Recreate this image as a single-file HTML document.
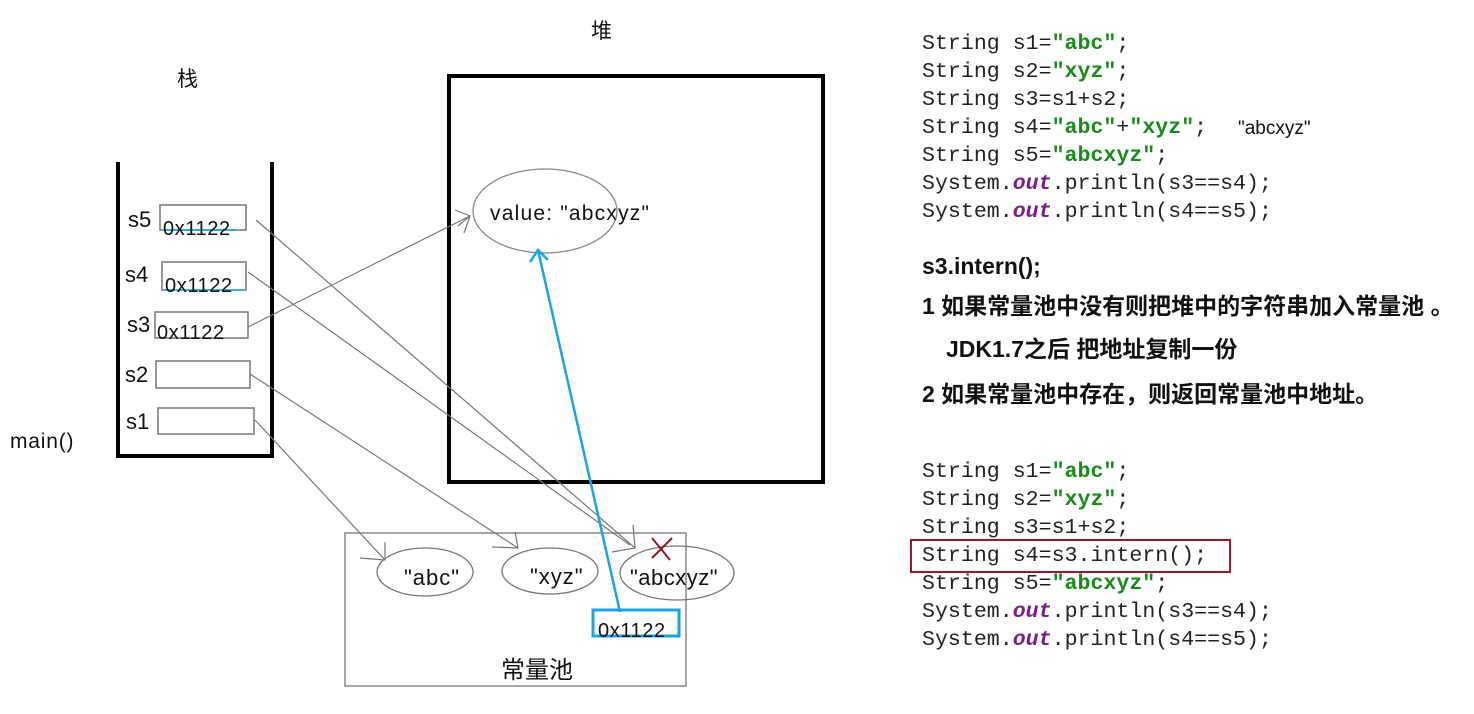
<!DOCTYPE html>
<html><head><meta charset="utf-8"><style>
html,body{margin:0;padding:0;background:#fff;width:1474px;height:714px;overflow:hidden}
svg{display:block}
.s{font-family:"Liberation Sans","Noto Sans CJK SC",sans-serif;fill:#111}
.m{font-family:"Liberation Mono",monospace;font-size:21.6px;fill:#222}
.g{fill:#1a8a1a;font-weight:bold}
.p{fill:#7a1d8f;font-weight:bold;font-style:italic}
.b{font-family:"Liberation Sans","Noto Sans CJK SC",sans-serif;font-weight:bold;font-size:23px;fill:#111}
</style></head><body>
<svg width="1474" height="714" viewBox="0 0 1474 714">
<g class="s" font-size="21">
<text x="177" y="86">栈</text>
<text x="591" y="38">堆</text>
<text x="10" y="448" font-size="21" letter-spacing="0.8">main()</text>
</g>
<!-- stack -->
<path d="M118 162 V456 H272 V162" fill="none" stroke="#000" stroke-width="4"/>
<g fill="none" stroke="#777" stroke-width="1.5">
<rect x="160" y="205" width="86" height="25"/>
<rect x="162" y="262" width="84" height="28"/>
<rect x="155" y="312" width="93" height="26"/>
<rect x="156" y="361" width="94" height="27"/>
<rect x="158" y="408" width="96" height="26"/>
</g>
<line x1="166" y1="230" x2="236" y2="230" stroke="#2aa8e0" stroke-width="2"/>
<line x1="164" y1="290" x2="246" y2="290" stroke="#2aa8e0" stroke-width="1.5"/>
<g class="s" font-size="22">
<text x="128" y="227">s5</text><text x="125" y="282">s4</text><text x="127" y="332">s3</text>
<text x="125" y="382">s2</text><text x="126" y="429">s1</text>
<text x="163" y="235" font-size="20" letter-spacing="0.6">0x1122</text>
<text x="165" y="292" font-size="20" letter-spacing="0.6">0x1122</text>
<text x="157" y="339" font-size="20" letter-spacing="0.6">0x1122</text>
</g>
<!-- heap -->
<rect x="449" y="76" width="374" height="406" fill="none" stroke="#000" stroke-width="4"/>
<ellipse cx="545" cy="211" rx="72" ry="42" fill="none" stroke="#888" stroke-width="1.3"/>
<text class="s" x="490" y="220" font-size="21" letter-spacing="1.2">value: "abcxyz"</text>
<!-- pool -->
<rect x="345" y="533" width="341" height="153" fill="none" stroke="#888" stroke-width="1.5"/>
<g fill="none" stroke="#777" stroke-width="1.3">
<ellipse cx="425" cy="572" rx="48" ry="24"/>
<ellipse cx="550" cy="571" rx="48" ry="23"/>
<ellipse cx="677" cy="573" rx="57" ry="27"/>
</g>
<g class="s" font-size="22">
<text x="404" y="585" letter-spacing="1">"abc"</text>
<text x="530" y="584" letter-spacing="1">"xyz"</text>
<text x="630" y="585" letter-spacing="0.5">"abcxyz"</text>
<text x="501" y="678" font-size="24">常量池</text>
</g>
<path d="M652 558 L672 538 M652 538 L670 560" stroke="#a01020" stroke-width="2"/>
<rect x="593" y="610" width="86" height="26" fill="none" stroke="#1aa3e8" stroke-width="3"/>
<text class="s" x="598" y="637" font-size="20" letter-spacing="0.6">0x1122</text>
<!-- arrows -->
<g fill="none" stroke="#777" stroke-width="1.2">
<path d="M256 220 L635 548 M248 272 L630 545 M248 327 L470 216 M250 374 L518 548 M255 420 L385 560"/>
<path d="M458 226 L470 216 L455 210 M464 233 L470 216"/>
<path d="M360 558 L385 560 L385 542"/>
<path d="M492 547 L518 548 L515 532"/>
<path d="M612 552 L635 548 L633 525"/>
</g>
<path d="M620 612 L538 250 M530 262 L538 250 L548 260" fill="none" stroke="#1aa3e8" stroke-width="2.5"/>
<!-- code 1 -->
<g class="m">
<text x="922" y="49">String s1=<tspan class="g">"abc"</tspan>;</text>
<text x="922" y="77">String s2=<tspan class="g">"xyz"</tspan>;</text>
<text x="922" y="105">String s3=s1+s2;</text>
<text x="922" y="133">String s4=<tspan class="g">"abc"</tspan>+<tspan class="g">"xyz"</tspan>;</text>
<text x="922" y="161">String s5=<tspan class="g">"abcxyz"</tspan>;</text>
<text x="922" y="189">System.<tspan class="p">out</tspan>.println(s3==s4);</text>
<text x="922" y="217">System.<tspan class="p">out</tspan>.println(s4==s5);</text>
</g>
<text class="s" x="1238" y="134" font-size="19">"abcxyz"</text>
<text class="b" x="922" y="274">s3.intern();</text>
<text class="b" x="922" y="314">1 如果常量池中没有则把堆中的字符串加入常量池 。</text>
<text class="b" x="946" y="357">JDK1.7之后 把地址复制一份</text>
<text class="b" x="922" y="402">2  如果常量池中存在，则返回常量池中地址。</text>
<!-- code 2 -->
<g class="m">
<text x="922" y="477">String s1=<tspan class="g">"abc"</tspan>;</text>
<text x="922" y="505">String s2=<tspan class="g">"xyz"</tspan>;</text>
<text x="922" y="533">String s3=s1+s2;</text>
<text x="922" y="561">String s4=s3.intern();</text>
<text x="922" y="589">String s5=<tspan class="g">"abcxyz"</tspan>;</text>
<text x="922" y="617">System.<tspan class="p">out</tspan>.println(s3==s4);</text>
<text x="922" y="645">System.<tspan class="p">out</tspan>.println(s4==s5);</text>
</g>
<rect x="911" y="540" width="319" height="32" fill="none" stroke="#a01828" stroke-width="2"/>
</svg>
</body></html>
